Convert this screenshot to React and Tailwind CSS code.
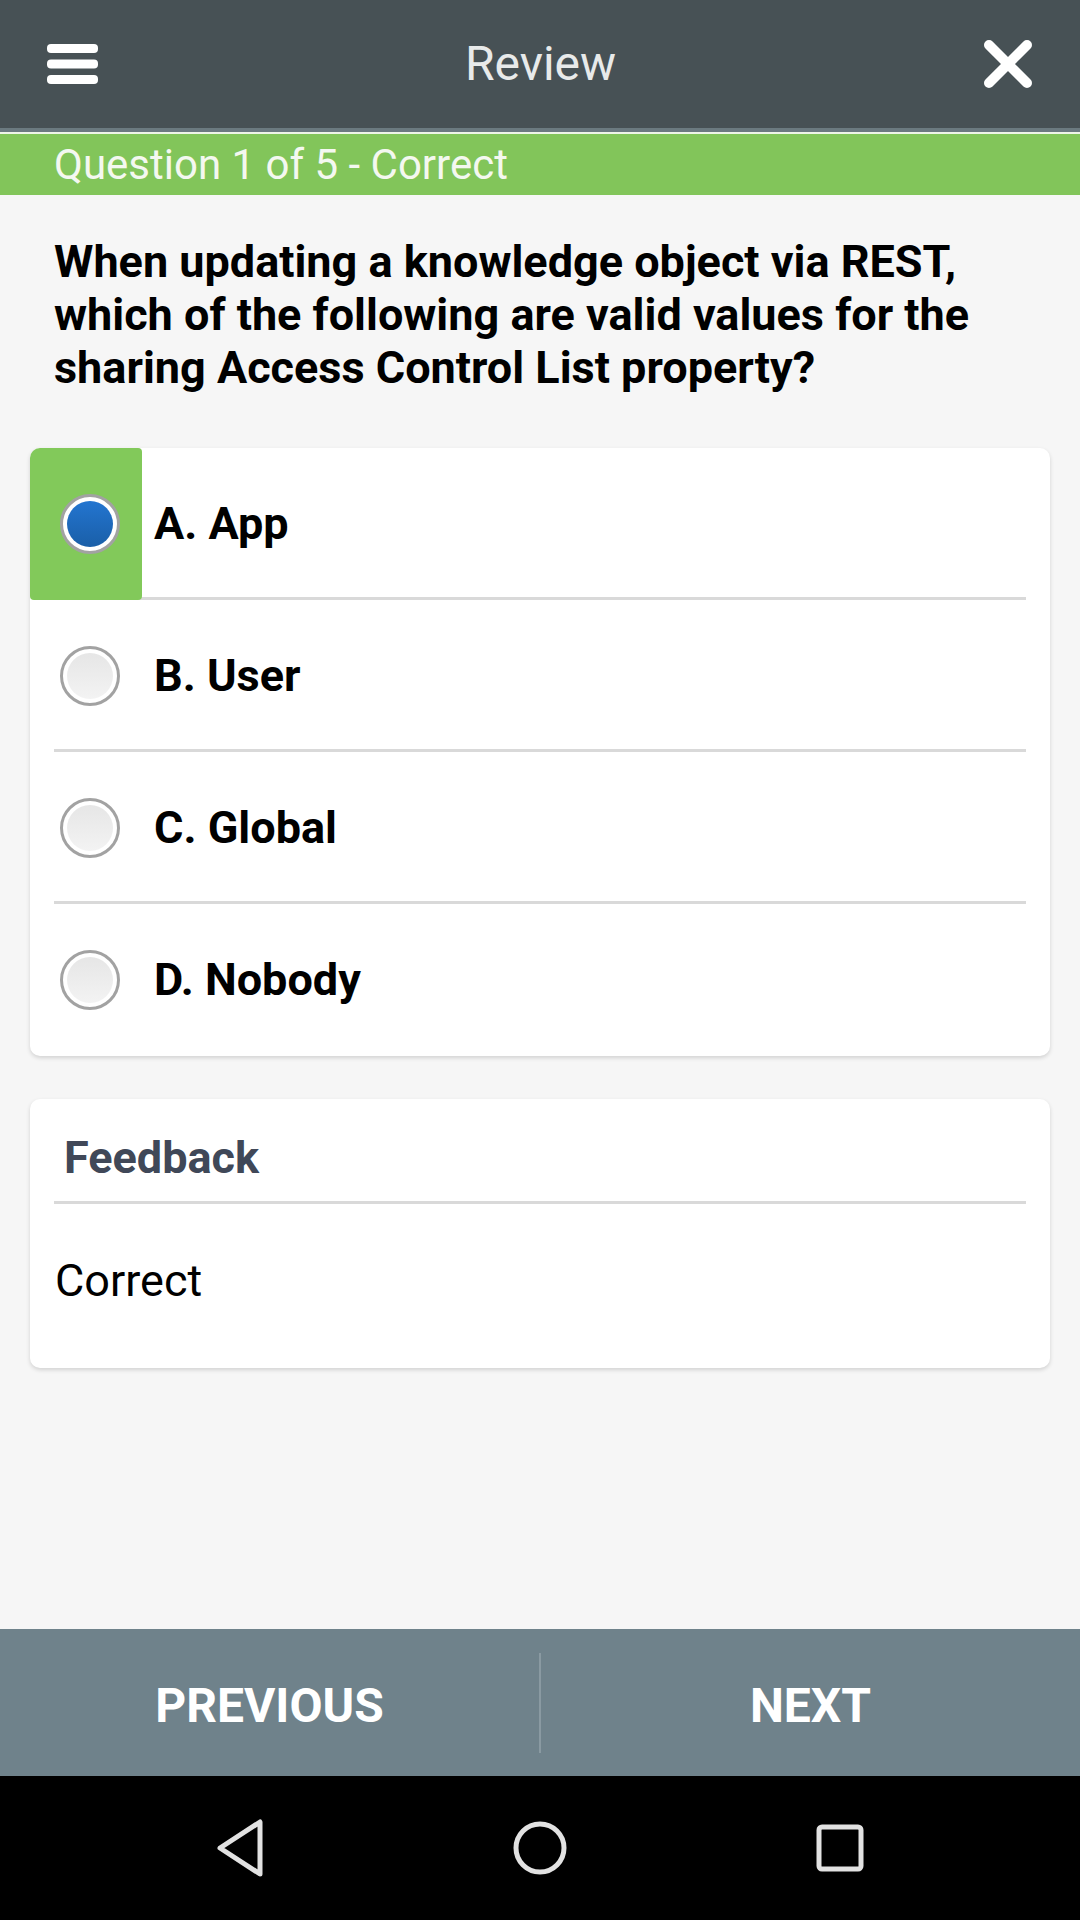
import React from "react";

const options = [
  { key: "A", label: "A. App", selected: true },
  { key: "B", label: "B. User" },
  { key: "C", label: "C. Global" },
  { key: "D", label: "D. Nobody" },
];

function Radio({ checked }) {
  return (
    <div className="w-[60px] h-[60px] rounded-full border-[3px] border-[#a2a2a2] bg-white flex items-center justify-center">
      {checked ? (
        <div className="w-[46px] h-[46px] rounded-full bg-gradient-to-b from-[#2375d0] to-[#1a5fa8]" />
      ) : (
        <div className="w-[46px] h-[46px] rounded-full bg-gradient-to-b from-[#e6e6e6] to-[#f3f3f3]" />
      )}
    </div>
  );
}

function OptionRow({ option, last }) {
  return (
    <div className="relative h-[152px] flex items-center">
      {!last && (
        <div className="absolute bottom-0 left-[24px] right-[24px] h-[3px] bg-[#d9d9d9]" />
      )}
      <div
        className={
          option.selected
            ? "relative z-10 w-[112px] h-full flex items-center pl-[30px] bg-[#82c95a] rounded-tl-[10px] rounded-r-[4px] rounded-bl-[4px]"
            : "relative z-10 w-[112px] h-full flex items-center pl-[30px]"
        }
      >
        <Radio checked={option.selected} />
      </div>
      <span className="ml-[12px] text-[45px] font-bold text-black">{option.label}</span>
    </div>
  );
}

export default function App() {
  return (
    <div
      className="w-[1080px] h-[1920px] flex flex-col bg-[#f6f6f6]"
      style={{ fontFamily: "Roboto, 'Noto Sans', sans-serif" }}
    >
      {/* top bar */}
      <div className="h-[128px] bg-[#475155] flex items-center justify-between px-[47px]">
        <svg width="51" height="40" viewBox="0 0 51 40">
          <rect x="0" y="0" width="51" height="9" rx="4" fill="#fff" />
          <rect x="0" y="15.5" width="51" height="9" rx="4" fill="#fff" />
          <rect x="0" y="31" width="51" height="9" rx="4" fill="#fff" />
        </svg>
        <span className="text-[48px] text-[#e8eaea]">Review</span>
        <svg width="50" height="48" viewBox="0 0 50 48">
          <path d="M6 5 L44 43 M44 5 L6 43" stroke="#fff" strokeWidth="10" strokeLinecap="round" />
        </svg>
      </div>
      <div className="h-[4px] bg-[#6b7a80]" />
      <div className="h-[2px] bg-[#eef5e8]" />
      <div className="h-[61px] bg-[#82c55a] flex items-center px-[54px]">
        <span className="text-[42px] text-[#f4f8f0]">Question 1 of 5 - Correct</span>
      </div>

      {/* content */}
      <div className="flex-1 flex flex-col">
        <p className="pt-[40px] px-[54px] text-[45px] leading-[53px] font-bold text-black">
          When updating a knowledge object via REST, which of the following are valid values for the sharing Access Control List property?
        </p>

        <div className="mt-[54px] mx-[30px] bg-white rounded-[10px] shadow-[0_2px_4px_rgba(0,0,0,0.15)]">
          {options.map((o, i) => (
            <OptionRow key={o.key} option={o} last={i === options.length - 1} />
          ))}
        </div>

        <div className="mt-[43px] mx-[30px] bg-white rounded-[10px] shadow-[0_2px_4px_rgba(0,0,0,0.15)]">
          <div className="h-[102px] pt-[16px] pl-[34px] flex items-center">
            <span className="text-[45px] font-bold text-[#404858]">Feedback</span>
          </div>
          <div className="mx-[24px] h-[3px] bg-[#d9d9d9]" />
          <div className="pt-[52px] pb-[62px] px-[25px]">
            <span className="block text-[45px] leading-[50px] text-black">Correct</span>
          </div>
        </div>
      </div>

      {/* bottom buttons */}
      <div className="h-[147px] bg-[#6f828b] flex items-center">
        <div className="flex-1 pt-[6px] text-center text-[48px] font-bold text-white">PREVIOUS</div>
        <div className="w-[2px] h-[100px] bg-[#8a9aa2]" />
        <div className="flex-1 pt-[6px] text-center text-[48px] font-bold text-white">NEXT</div>
      </div>

      {/* android nav */}
      <div className="h-[144px] bg-black grid grid-cols-3 px-[90px] items-center">
        <div className="flex justify-center">
          <svg width="56" height="60" viewBox="0 0 56 60">
            <path d="M48 4 L48 56 L8 30 Z" fill="none" stroke="#e2e2e2" strokeWidth="5" strokeLinejoin="round" />
          </svg>
        </div>
        <div className="flex justify-center">
          <svg width="56" height="56" viewBox="0 0 56 56">
            <circle cx="28" cy="28" r="24" fill="none" stroke="#e2e2e2" strokeWidth="5" />
          </svg>
        </div>
        <div className="flex justify-center">
          <svg width="52" height="52" viewBox="0 0 52 52">
            <rect x="5" y="5" width="42" height="42" rx="3" fill="none" stroke="#e2e2e2" strokeWidth="5" />
          </svg>
        </div>
      </div>
    </div>
  );
}
